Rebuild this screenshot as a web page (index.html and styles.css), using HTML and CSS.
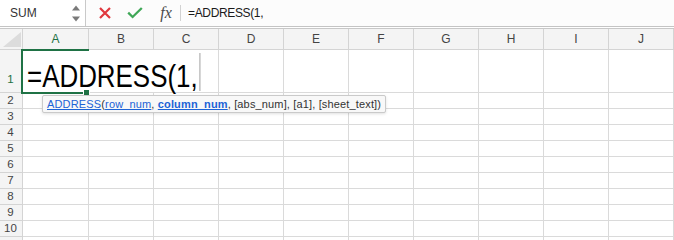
FILE: index.html
```html
<!DOCTYPE html>
<html lang="en">
<head>
<meta charset="utf-8">
<title>ADDRESS</title>
<link rel="stylesheet" href="styles.css">
</head>
<body>
<div class="app">
  <div class="toolbar">
    <div class="namebox">
      <span class="namebox-text">SUM</span>
      <svg class="spinner" width="8" height="18" viewBox="0 0 8 18"><path d="M0 5.5 L4 0.5 L8 5.5 Z" fill="#7a7a7a"/><path d="M0 11.5 L8 11.5 L4 16.5 Z" fill="#7a7a7a"/></svg>
    </div>
    <div class="actions">
      <span class="action"><svg width="14" height="14" viewBox="0 0 14 14"><path d="M2 2 L12 12 M12 2 L2 12" stroke="#e0383e" stroke-width="2.2" stroke-linecap="butt" fill="none"/></svg></span>
      <span class="action"><svg width="16" height="12" viewBox="0 0 16 12"><path d="M1.2 5.6 L5.6 10 L14.8 1" stroke="#3fa757" stroke-width="2.3" fill="none"/></svg></span>
      <span class="action fx">fx</span>
    </div>
    <span class="divider"></span>
    <div class="formula">=ADDRESS(1,</div>
  </div>
  <div class="sheet">
    <div class="grid">
      <div class="corner"><svg width="18" height="15" viewBox="0 0 18 15"><path d="M18 0 L18 15 L0 15 Z" fill="#dcdcdc"/></svg></div>
      <div class="colhead is-selected">A</div>
      <div class="colhead">B</div>
      <div class="colhead">C</div>
      <div class="colhead">D</div>
      <div class="colhead">E</div>
      <div class="colhead">F</div>
      <div class="colhead">G</div>
      <div class="colhead">H</div>
      <div class="colhead">I</div>
      <div class="colhead">J</div>

      <div class="rowhead is-selected row-tall">1</div>
      <div class="cell edit-cell"><span class="edit-text">=ADDRESS(1,<span class="caret"></span></span></div>
      <div class="cell"></div><div class="cell"></div><div class="cell"></div><div class="cell"></div><div class="cell"></div><div class="cell"></div><div class="cell"></div>

      <div class="rowhead">2</div>
      <div class="cell"></div><div class="cell"></div><div class="cell"></div><div class="cell"></div><div class="cell"></div><div class="cell"></div><div class="cell"></div><div class="cell"></div><div class="cell"></div><div class="cell"></div>
      <div class="rowhead">3</div>
      <div class="cell"></div><div class="cell"></div><div class="cell"></div><div class="cell"></div><div class="cell"></div><div class="cell"></div><div class="cell"></div><div class="cell"></div><div class="cell"></div><div class="cell"></div>
      <div class="rowhead">4</div>
      <div class="cell"></div><div class="cell"></div><div class="cell"></div><div class="cell"></div><div class="cell"></div><div class="cell"></div><div class="cell"></div><div class="cell"></div><div class="cell"></div><div class="cell"></div>
      <div class="rowhead">5</div>
      <div class="cell"></div><div class="cell"></div><div class="cell"></div><div class="cell"></div><div class="cell"></div><div class="cell"></div><div class="cell"></div><div class="cell"></div><div class="cell"></div><div class="cell"></div>
      <div class="rowhead">6</div>
      <div class="cell"></div><div class="cell"></div><div class="cell"></div><div class="cell"></div><div class="cell"></div><div class="cell"></div><div class="cell"></div><div class="cell"></div><div class="cell"></div><div class="cell"></div>
      <div class="rowhead">7</div>
      <div class="cell"></div><div class="cell"></div><div class="cell"></div><div class="cell"></div><div class="cell"></div><div class="cell"></div><div class="cell"></div><div class="cell"></div><div class="cell"></div><div class="cell"></div>
      <div class="rowhead">8</div>
      <div class="cell"></div><div class="cell"></div><div class="cell"></div><div class="cell"></div><div class="cell"></div><div class="cell"></div><div class="cell"></div><div class="cell"></div><div class="cell"></div><div class="cell"></div>
      <div class="rowhead">9</div>
      <div class="cell"></div><div class="cell"></div><div class="cell"></div><div class="cell"></div><div class="cell"></div><div class="cell"></div><div class="cell"></div><div class="cell"></div><div class="cell"></div><div class="cell"></div>
      <div class="rowhead">10</div>
      <div class="cell"></div><div class="cell"></div><div class="cell"></div><div class="cell"></div><div class="cell"></div><div class="cell"></div><div class="cell"></div><div class="cell"></div><div class="cell"></div><div class="cell"></div>
      <div class="rowhead"></div>
      <div class="cell"></div><div class="cell"></div><div class="cell"></div><div class="cell"></div><div class="cell"></div><div class="cell"></div><div class="cell"></div><div class="cell"></div><div class="cell"></div><div class="cell"></div>
    </div>
    <div class="selection"></div>
    <span class="fill-handle"></span>
    <div class="tooltip"><a class="tip-link">ADDRESS</a>(<a class="tip-link">row_num</a>, <a class="tip-link tip-current">column_num</a>, [abs_num], [a1], [sheet_text])</div>
  </div>
</div>
</body>
</html>
```
FILE: styles.css
```css
* { box-sizing: border-box; }
html, body { margin: 0; padding: 0; background: #ffffff; }
body {
  width: 674px;
  height: 240px;
  overflow: hidden;
  font-family: "Liberation Sans", Arial, sans-serif;
  color: #222;
}
.app { width: 674px; height: 240px; overflow: hidden; }

/* toolbar */
.toolbar {
  height: 27px;
  display: flex;
  align-items: center;
  background: #fcfcfc;
  border-bottom: 1px solid #c4c4c4;
}
.namebox {
  width: 86px;
  height: 26px;
  display: flex;
  align-items: center;
  justify-content: space-between;
  padding: 0 5px 0 10px;
  background: #ffffff;
  border-right: 1px solid #c9c9c9;
}
.namebox-text { font-size: 12px; color: #333; }
.spinner { display: block; margin-top: 1px; }
.actions {
  display: flex;
  align-items: center;
  padding-left: 4px;
  height: 26px;
}
.action {
  width: 30px;
  height: 26px;
  display: flex;
  align-items: center;
  justify-content: center;
}
.action svg { display: block; }
.fx {
  font-family: "Liberation Serif", "Times New Roman", serif;
  font-style: italic;
  font-size: 16px;
  color: #4a4a4a;
  padding-left: 2px;
  padding-bottom: 1px;
}
.divider {
  width: 1px;
  height: 16px;
  background: #d2d2d2;
}
.formula {
  padding-left: 7px;
  font-size: 12px;
  letter-spacing: -0.35px;
  color: #1a1a1a;
  white-space: nowrap;
}

/* sheet */
.sheet {
  position: relative;
  margin-top: 1px;
  border-top: 1px solid #c8c8c8;
}
.grid {
  display: grid;
  grid-template-columns: 23px 66px repeat(9, 65px);
  grid-template-rows: 21px 43px repeat(10, 16px);
}
.corner, .colhead, .rowhead {
  background: #f4f4f4;
  border-right: 1px solid #d4d4d4;
  border-bottom: 1px solid #d4d4d4;
  color: #444;
}
.corner {
  display: flex;
  align-items: flex-end;
  justify-content: flex-end;
  padding: 0 1px 2px 0;
}
.corner svg { display: block; }
.colhead {
  display: flex;
  align-items: center;
  justify-content: center;
  font-size: 12px;
  line-height: 20px;
}
.rowhead {
  display: flex;
  align-items: center;
  justify-content: center;
  font-size: 11.5px;
  line-height: 15px;
  padding-right: 1px;
}
.row-tall {
  align-items: flex-end;
  padding-bottom: 5px;
}
.is-selected { color: #1d7044; }
.cell {
  border-right: 1px solid #dadada;
  border-bottom: 1px solid #dadada;
  background: #ffffff;
}
.edit-cell {
  grid-column: span 3;
  display: flex;
  align-items: flex-end;
  padding-left: 4px;
  overflow: visible;
}
.edit-text {
  display: inline-block;
  font-size: 32px;
  line-height: 32px;
  color: #000;
  white-space: nowrap;
  transform: scaleX(0.81);
  transform-origin: left bottom;
}
.caret {
  display: inline-block;
  width: 1.25px;
  height: 38px;
  margin-left: 2px;
  vertical-align: -4px;
  background: #8a8a8a;
}

/* selection overlay */
.selection {
  position: absolute;
  left: 21px;
  top: 20px;
  width: 68px;
  height: 45px;
  border-top: 2px solid #1f7245;
  border-left: 2px solid #1f7245;
  border-bottom: 2px solid #1f7245;
}
.fill-handle {
  position: absolute;
  left: 83px;
  top: 60px;
  width: 7px;
  height: 7px;
  background: #1f7245;
  border: 1px solid #ffffff;
}

/* tooltip */
.tooltip {
  position: absolute;
  left: 42px;
  top: 66px;
  height: 18px;
  padding: 0 4px;
  font-size: 11px;
  line-height: 16px;
  letter-spacing: 0.15px;
  color: #333;
  white-space: nowrap;
  background: #f8f8f8;
  border: 1px solid #cacaca;
  border-radius: 2px;
  box-shadow: 0 1px 3px rgba(0, 0, 0, 0.12);
}
.tip-link {
  color: #1d63d6;
  text-decoration: underline;
}
.tip-current { font-weight: bold; }
```
